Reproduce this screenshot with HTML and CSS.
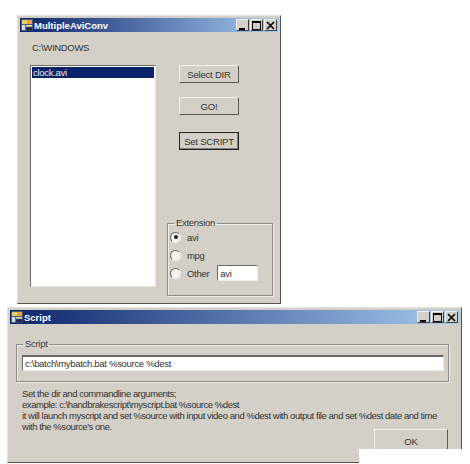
FILE: index.html
```html
<!DOCTYPE html>
<html lang="en">
<head>
    <meta charset="UTF-8">
    <title>MultipleAviConv</title>
    <link rel="stylesheet" href="styles.css">
</head>
<body>

<svg width="0" height="0" class="defs">
    <symbol id="appicon" viewBox="0 0 14 14">
        <rect x="0" y="0" width="14" height="14" fill="#3a4a78"/>
        <rect x="1" y="1" width="6" height="5" fill="#e8d060"/>
        <rect x="7" y="1" width="6" height="5" fill="#f0a040"/>
        <rect x="1" y="7" width="4" height="6" fill="#d8d8e8"/>
        <rect x="6" y="7" width="7" height="2" fill="#e8e0a0"/>
        <rect x="6" y="10" width="7" height="3" fill="#202848"/>
    </symbol>
    <symbol id="icon-min" viewBox="0 0 9 9"><path d="M1 7h6v2H1z" fill="#000"/></symbol>
    <symbol id="icon-max" viewBox="0 0 9 9"><path d="M0 0h9v9H0zM1 2v6h7V2z" fill="#000" fill-rule="evenodd"/></symbol>
    <symbol id="icon-close" viewBox="0 0 9 9"><path d="M1 1l7 7M8 1L1 8" stroke="#000" stroke-width="1.6" fill="none"/></symbol>
</svg>

<div class="window main-win">
    <div class="titlebar">
        <svg class="app-icon"><use href="#appicon"/></svg>
        <span class="title-text">MultipleAviConv</span>
        <div class="caption-btns">
            <span class="cap-btn"><svg><use href="#icon-min"/></svg></span>
            <span class="cap-btn"><svg><use href="#icon-max"/></svg></span>
            <span class="cap-btn close"><svg><use href="#icon-close"/></svg></span>
        </div>
    </div>
    <div class="main-body">
        <div class="left-col">
            <div class="path-label">C:\WINDOWS</div>
            <div class="listbox">
                <div class="list-item selected">clock.avi</div>
            </div>
        </div>
        <div class="right-col">
            <div class="btn-stack">
                <button class="btn">Select DIR</button>
                <button class="btn">GO!</button>
                <button class="btn default">Set SCRIPT</button>
            </div>
            <fieldset class="group ext-group">
                <legend>Extension</legend>
                <div class="radio-row"><span class="radio checked"></span><span>avi</span></div>
                <div class="radio-row"><span class="radio"></span><span>mpg</span></div>
                <div class="radio-row">
                    <span class="radio"></span><span>Other</span>
                    <input class="textbox ext-input" value="avi">
                </div>
            </fieldset>
        </div>
    </div>
</div>

<div class="window script-win">
    <div class="titlebar">
        <svg class="app-icon"><use href="#appicon"/></svg>
        <span class="title-text">Script</span>
        <div class="caption-btns">
            <span class="cap-btn"><svg><use href="#icon-min"/></svg></span>
            <span class="cap-btn"><svg><use href="#icon-max"/></svg></span>
            <span class="cap-btn close"><svg><use href="#icon-close"/></svg></span>
        </div>
    </div>
    <div class="script-body">
        <fieldset class="group script-group">
            <legend>Script</legend>
            <input class="textbox script-input" value="c:\batch\mybatch.bat %source %dest">
        </fieldset>
        <p class="help">Set the dir and commandline arguments;<br>
        example: c:\handbrakescript\myscript.bat %source %dest<br>
        it will launch myscript and set %source with input video and %dest with output file and set %dest date and time<br>
        with the %source's one.</p>
        <div class="ok-row"><button class="btn ok">OK</button></div>
    </div>
</div>

<div class="corner-patch"></div>

</body>
</html>
```

FILE: styles.css
```css
html,body{margin:0;padding:0;background:#fff;overflow:hidden;}
body{width:470px;height:464px;position:relative;font-family:"Liberation Sans",Arial,sans-serif;font-size:9.5px;letter-spacing:-0.3px;color:#333;}
.defs{position:absolute;}

/* windows sit on a free desktop */
.window{position:absolute;box-sizing:border-box;background:#d4d0c8;padding:2px 1px 0 2px;border:1px solid;border-color:#e4e2dc #55534f #55534f #e4e2dc;overflow:hidden;}
.main-win{left:17px;top:15px;width:264px;height:289px;}
.script-win{left:7px;top:307px;width:455px;height:156px;}

.titlebar{height:14px;display:flex;align-items:center;padding-left:1px;background:linear-gradient(to right,#0a246a,#a6caf0);}
.app-icon{width:12px;height:12px;flex:none;}
.title-text{margin-left:1px;color:#fff;font-weight:700;font-size:9.5px;letter-spacing:0;}
.caption-btns{margin-left:auto;display:flex;gap:1px;padding-right:2px;}
.cap-btn{width:13px;height:12px;box-sizing:border-box;background:#d4d0c8;border:1px solid;border-color:#f4f2ee #404040 #404040 #f4f2ee;display:flex;align-items:center;justify-content:center;}
.cap-btn svg{width:9px;height:9px;}

.main-body{display:flex;height:264px;padding-left:10px;box-sizing:border-box;}
.left-col{width:126px;flex:none;}
.path-label{height:14px;line-height:14px;margin-top:9px;margin-left:2px;}
.listbox{margin-top:10px;height:222px;box-sizing:border-box;background:#fff;border:1px solid;border-color:#6c6a66 #e8e6e0 #e8e6e0 #6c6a66;padding:1px;}
.list-item{height:11px;line-height:11px;padding-left:1px;}
.list-item.selected{background:#0a246a;color:#e8e8f0;}

.right-col{margin-left:11px;width:106px;flex:none;display:flex;flex-direction:column;}
.btn-stack{margin-top:33px;margin-left:12px;display:flex;flex-direction:column;gap:14px;}
.btn{box-sizing:border-box;width:60px;height:18px;padding:0;background:#d4d0c8;font-family:inherit;font-size:9.5px;letter-spacing:-0.2px;color:#333;border:1px solid;border-color:#f4f2ee #5c5a56 #5c5a56 #f4f2ee;}
.btn.default{margin-top:3px;border-color:#222;box-shadow:inset -1px -1px 0 #808080;}

.group{margin:0;padding:0;box-sizing:border-box;border:1px solid #8e8c86;box-shadow:1px 1px 0 #eeece6,inset 1px 1px 0 #eeece6;}
.group legend{padding:0 2px;margin-left:4px;line-height:10px;}
.ext-group{margin-top:auto;height:78px;padding:0 0 0 2px;}
.radio-row{height:18px;display:flex;align-items:center;gap:6px;}
.radio{width:11px;height:11px;box-sizing:border-box;border-radius:50%;background:#f4f2ee;border:1px solid #6c6a66;border-right-color:#eeece6;border-bottom-color:#eeece6;display:flex;align-items:center;justify-content:center;}
.radio.checked::after{content:"";width:4px;height:4px;border-radius:50%;background:#222;}
.textbox{box-sizing:border-box;margin:0;padding:0 0 0 2px;background:#fff;color:#333;font-family:inherit;font-size:9.5px;letter-spacing:-0.3px;border:1px solid;border-color:#6c6a66 #eeece6 #eeece6 #6c6a66;outline:none;}
.ext-input{width:41px;height:16px;margin-left:2px;}

.script-body{padding:15px 12px 0 6px;display:flex;flex-direction:column;}
.script-group{height:43px;padding:6px 3px 0 5px;width:433px;}
.script-group legend{margin-left:1px;}
.script-input{width:422px;height:16px;display:block;border-top-width:2px;}
.help{margin:6px 0 0 6px;line-height:11px;white-space:nowrap;letter-spacing:-0.45px;}
.ok-row{display:flex;justify-content:flex-end;margin-top:-3px;}
.btn.ok{width:74px;height:24px;}

/* white cut-out at the bottom right of the picture */
.corner-patch{position:absolute;left:359px;top:449px;width:111px;height:15px;background:#fff;}
```
